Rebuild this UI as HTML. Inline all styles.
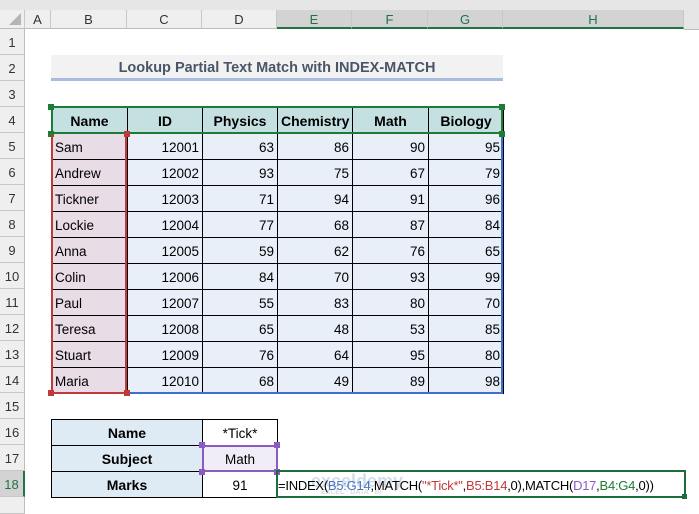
<!DOCTYPE html>
<html><head><meta charset="utf-8"><style>
*{margin:0;padding:0;box-sizing:border-box}
body{width:699px;height:514px;overflow:hidden;background:#fff;font-family:"Liberation Sans",sans-serif;font-size:13.5px;color:#000;position:relative}
.a{position:absolute}
.ch{position:absolute;top:10px;height:19px;background:#efefef;border-right:1px solid #c8c8c8;border-bottom:1px solid #bdbdbd;text-align:center;line-height:19px;font-size:13px;color:#333}
.ch.s{background:#d3d3d3;color:#217346;border-bottom:2px solid #217346}
.rh{position:absolute;left:0;width:25px;height:26px;background:#efefef;border-bottom:1px solid #c8c8c8;border-right:1px solid #bdbdbd;text-align:center;line-height:27px;font-size:13px;color:#333}
.rh.s{background:#d3d3d3;color:#217346;border-right:2px solid #217346}
table{border-collapse:collapse;position:absolute;table-layout:fixed}
td{height:26px;border:1px solid #000;padding:1px 3px 0;white-space:nowrap;overflow:hidden}
.t td{background:#e9eff8;text-align:right}
.t td.n{background:#e8dde6;text-align:left}
.t tr.h td{background:#c5e0e0;font-weight:bold;text-align:center;font-size:14px}
.b td{text-align:center}
.b td.l{background:#deeaf4;font-weight:bold;font-size:14px}
.hd{position:absolute;width:6px;height:6px}
</style></head><body>
<div class="a" style="left:0;top:0;width:699px;height:10px;background:#e6e6e6"></div>
<div class="a" style="left:684px;top:0;width:15px;height:30px;background:#e6e6e6;border-bottom:1px solid #bdbdbd"></div>
<div class="ch" style="left:0;width:25px;background:#efefef"><svg width="14" height="14" style="position:absolute;right:2px;bottom:2px"><polygon points="13,1 13,13 1,13" fill="#b5b5b5"/></svg></div>
<div class="ch" style="left:25px;width:26px">A</div>
<div class="ch" style="left:51px;width:76px">B</div>
<div class="ch" style="left:127px;width:75px">C</div>
<div class="ch" style="left:202px;width:75px">D</div>
<div class="ch s" style="left:277px;width:75px">E</div>
<div class="ch s" style="left:352px;width:76px">F</div>
<div class="ch s" style="left:428px;width:75px">G</div>
<div class="ch s" style="left:503px;width:181px">H</div>

<div class="rh" style="top:29px">1</div>
<div class="rh" style="top:55px">2</div>
<div class="rh" style="top:81px">3</div>
<div class="rh" style="top:107px">4</div>
<div class="rh" style="top:133px">5</div>
<div class="rh" style="top:159px">6</div>
<div class="rh" style="top:185px">7</div>
<div class="rh" style="top:211px">8</div>
<div class="rh" style="top:237px">9</div>
<div class="rh" style="top:263px">10</div>
<div class="rh" style="top:289px">11</div>
<div class="rh" style="top:315px">12</div>
<div class="rh" style="top:341px">13</div>
<div class="rh" style="top:367px">14</div>
<div class="rh" style="top:393px">15</div>
<div class="rh" style="top:419px">16</div>
<div class="rh" style="top:445px">17</div>
<div class="rh s" style="top:471px">18</div>
<div class="rh" style="top:497px;height:17px"></div>

<div class="a" style="left:51px;top:55px;width:452px;height:26px;background:#f2f2f2;border-bottom:3px solid #a9bde3;text-align:center;line-height:26px;font-weight:bold;font-size:14.5px;color:#4a5568">Lookup Partial Text Match with INDEX-MATCH</div>

<table class="t" style="left:51px;top:107px;width:452px">
<colgroup><col style="width:76px"><col style="width:75px"><col style="width:75px"><col style="width:75px"><col style="width:76px"><col style="width:75px"></colgroup>
<tr class="h"><td>Name</td><td>ID</td><td>Physics</td><td>Chemistry</td><td>Math</td><td>Biology</td></tr>
<tr><td class="n">Sam</td><td>12001</td><td>63</td><td>86</td><td>90</td><td>95</td></tr>
<tr><td class="n">Andrew</td><td>12002</td><td>93</td><td>75</td><td>67</td><td>79</td></tr>
<tr><td class="n">Tickner</td><td>12003</td><td>71</td><td>94</td><td>91</td><td>96</td></tr>
<tr><td class="n">Lockie</td><td>12004</td><td>77</td><td>68</td><td>87</td><td>84</td></tr>
<tr><td class="n">Anna</td><td>12005</td><td>59</td><td>62</td><td>76</td><td>65</td></tr>
<tr><td class="n">Colin</td><td>12006</td><td>84</td><td>70</td><td>93</td><td>99</td></tr>
<tr><td class="n">Paul</td><td>12007</td><td>55</td><td>83</td><td>80</td><td>70</td></tr>
<tr><td class="n">Teresa</td><td>12008</td><td>65</td><td>48</td><td>53</td><td>85</td></tr>
<tr><td class="n">Stuart</td><td>12009</td><td>76</td><td>64</td><td>95</td><td>80</td></tr>
<tr><td class="n">Maria</td><td>12010</td><td>68</td><td>49</td><td>89</td><td>98</td></tr>
</table>
<div class="a" style="left:51px;top:106px;width:452px;height:28px;border:2px solid #1e7b34"></div>
<div class="hd" style="left:48px;top:104px;background:#1e7b34"></div>
<div class="hd" style="left:499px;top:104px;background:#1e7b34"></div>
<div class="hd" style="left:48px;top:131px;background:#1e7b34"></div>
<div class="hd" style="left:499px;top:131px;background:#1e7b34"></div>
<div class="a" style="left:51px;top:134px;width:76px;height:260px;border:2px solid #c0393b;border-top:none"></div>
<div class="hd" style="left:124px;top:131px;background:#c0393b"></div>
<div class="hd" style="left:48px;top:390px;background:#c0393b"></div>
<div class="hd" style="left:124px;top:390px;background:#c0393b"></div>
<div class="a" style="left:130px;top:392px;width:373px;height:2px;background:#3c6fcf"></div>
<div class="a" style="left:501px;top:137px;width:2px;height:257px;background:#3c6fcf"></div>

<table class="b" style="left:51px;top:419px;width:226px">
<colgroup><col style="width:151px"><col style="width:75px"></colgroup>
<tr><td class="l">Name</td><td>*Tick*</td></tr>
<tr><td class="l">Subject</td><td style="background:#f1edf6">Math</td></tr>
<tr><td class="l">Marks</td><td>91</td></tr>
</table>
<div class="a" style="left:202px;top:445px;width:76px;height:27px;border:2px solid #8a5cc2"></div>
<div class="hd" style="left:199px;top:442px;background:#8a5cc2"></div>
<div class="hd" style="left:274px;top:442px;background:#8a5cc2"></div>
<div class="hd" style="left:199px;top:469px;background:#8a5cc2"></div>
<div class="hd" style="left:274px;top:469px;background:#8a5cc2"></div>

<div class="a" style="left:276px;top:470px;width:410px;height:28px;border:2px solid #1e6b3c"></div>
<div class="hd" style="left:682px;top:494px;width:5px;height:5px;background:#1e6b3c"></div>
<div class="a" style="left:296px;top:472px;width:130px;height:24px;opacity:.35;font-weight:bold;color:#7f9fc0;font-size:18px;line-height:18px">&nbsp;&nbsp;&nbsp;exceldemy<div style="font-size:7px;line-height:6px;color:#999;padding-left:25px">EXCEL · DATA · BI</div></div>
<div class="a" style="left:278px;top:472px;height:26px;line-height:27px;font-size:13px;letter-spacing:-0.25px;white-space:nowrap">=INDEX(<span style="color:#4a74c4">B5:G14</span>,MATCH(<span style="color:#c0393b">"*Tick*"</span>,<span style="color:#c0393b">B5:B14</span>,0),MATCH(<span style="color:#8a5cc2">D17</span>,<span style="color:#1e7b34">B4:G4</span>,0))</div>
</body></html>
